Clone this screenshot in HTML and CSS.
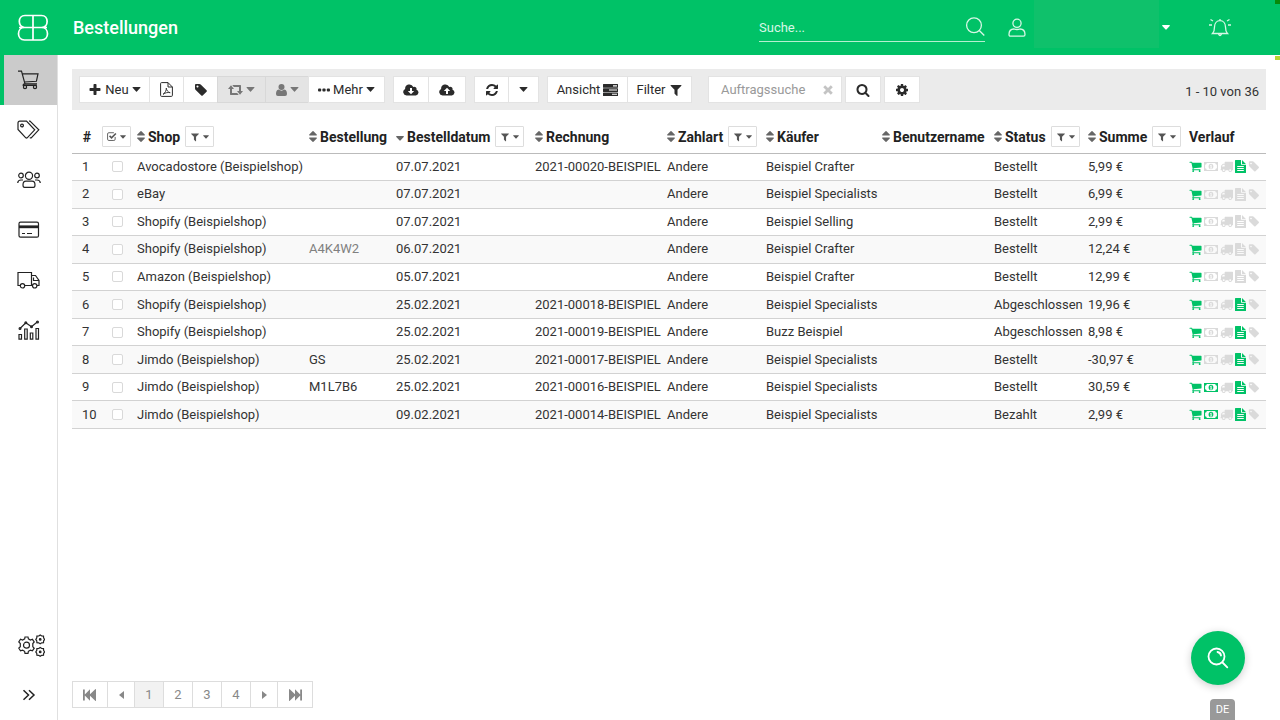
FILE: index.html
```html
<!DOCTYPE html>
<html lang="de">
<head>
<meta charset="utf-8">
<title>Bestellungen</title>
<link rel="stylesheet" href="styles.css">
</head>
<body>
<svg class="sprite" aria-hidden="true">
  <symbol id="plus" viewBox="0 0 1792 1792"><path d="M1600 736v192q0 40-28 68t-68 28h-416v416q0 40-28 68t-68 28h-192q-40 0-68-28t-28-68v-416h-416q-40 0-68-28t-28-68v-192q0-40 28-68t68-28h416v-416q0-40 28-68t68-28h192q40 0 68 28t28 68v416h416q40 0 68 28t28 68z"/></symbol>
  <symbol id="caret" viewBox="0 0 10 6"><path d="M.8 0h8.400q1 .2.4 1L5.500 5.500q-.5.4-1 0L.4 1Q-.2.200.8 0z"/></symbol>
  <symbol id="tag" viewBox="0 0 1792 1792"><path d="M576 448q0-53-37.500-90.500t-90.500-37.500-90.500 37.500-37.500 90.500 37.500 90.500 90.500 37.500 90.500-37.500 37.500-90.500zm1067 576q0 53-37 90l-491 492q-39 37-91 37-53 0-90-37l-715-716q-38-37-64.500-101t-26.500-117v-416q0-52 38-90t90-38h416q53 0 117 26.500t102 64.500l715 714q37 39 37 91z"/></symbol>
  <symbol id="cart" viewBox="0 0 1792 1792"><path d="M704 1536q0 52-38 90t-90 38-90-38-38-90 38-90 90-38 90 38 38 90zm896 0q0 52-38 90t-90 38-90-38-38-90 38-90 90-38 90 38 38 90zm128-1088v512q0 24-16.500 42.500t-40.500 21.500l-1044 122q13 60 13 70 0 16-24 64h920q26 0 45 19t19 45-19 45-45 19h-1024q-26 0-45-19t-19-45q0-11 8-31.500t16-36 21.500-40 15.500-29.500l-177-823h-204q-26 0-45-19t-19-45 19-45 45-19h256q16 0 28.500 6.500t19.500 15.500 13 24.500 8 26 5.500 29.500 4.500 26h1201q26 0 45 19t19 45z"/></symbol>
  <symbol id="truck" viewBox="0 0 1792 1792"><path d="M640 1408q0-52-38-90t-90-38-90 38-38 90 38 90 90 38 90-38 38-90zm-384-512h384v-256h-158q-13 0-22 9l-195 195q-9 9-9 22v30zm1280 512q0-52-38-90t-90-38-90 38-38 90 38 90 90 38 90-38 38-90zm256-1088v1024q0 15-4 26.500t-13.500 18.500-16.500 11.500-23.500 6-22.500 2-25.500 0-22.500-.5q0 106-75 181t-181 75-181-75-75-181h-384q0 106-75 181t-181 75-181-75-75-181h-64q-3 0-22.500.5t-25.500 0-22.500-2-23.500-6-16.500-11.500-13.500-18.500-4-26.500q0-26 19-45t45-19v-320q0-8-.5-35t0-38 2.500-34.500 6.500-37 14-30.500 22.500-30l198-198q19-19 50.500-32t58.500-13h160v-192q0-26 19-45t45-19h1024q26 0 45 19t19 45z"/></symbol>
  <symbol id="search" viewBox="0 0 1792 1792"><path d="M1216 832q0-185-131.500-316.500t-316.500-131.500-316.500 131.500-131.500 316.500 131.500 316.500 316.500 131.500 316.500-131.500 131.500-316.500zm512 832q0 52-38 90t-90 38q-54 0-90-38l-343-342q-179 124-399 124-143 0-273.500-55.500t-225-150-150-225-55.500-273.500 55.500-273.500 150-225 225-150 273.500-55.500 273.500 55.500 225 150 150 225 55.500 273.500q0 220-124 399l343 343q37 37 37 90z"/></symbol>
  <symbol id="cog" viewBox="0 0 1792 1792"><path d="M1152 896q0-106-75-181t-181-75-181 75-75 181 75 181 181 75 181-75 75-181zm512-109v222q0 12-8 23t-20 13l-185 28q-19 54-39 91 35 50 107 138 10 12 10 25t-9 23q-27 37-99 108t-94 71q-12 0-26-9l-138-108q-44 23-91 38-16 136-29 186-7 28-36 28h-222q-14 0-24.500-8.500t-11.500-21.500l-28-184q-49-16-90-37l-141 107q-10 9-25 9-14 0-25-11-126-114-165-168-7-10-7-23 0-12 8-23 15-21 51-66.500t54-70.500q-27-50-41-99l-183-27q-13-2-21-12.500t-8-23.500v-222q0-12 8-23t19-13l186-28q14-46 39-92-40-57-107-138-10-12-10-24 0-10 9-23 26-36 98.500-107.500t94.500-71.500q13 0 26 10l138 107q44-23 91-38 16-136 29-186 7-28 36-28h222q14 0 24.500 8.500t11.500 21.500l28 184q49 16 90 37l142-107q9-9 24-9 13 0 25 10 129 119 165 170 7 8 7 22 0 12-8 23-15 21-51 66.500t-54 70.500q26 50 41 98l183 28q13 2 21 12.500t8 23.500z"/></symbol>
  <symbol id="filter" viewBox="0 0 1792 1792"><path d="M1595 295q17 41-14 70l-493 493v742q0 42-39 59-13 5-25 5-27 0-45-19l-256-256q-19-19-19-45v-486l-493-493q-31-29-14-70 17-39 59-39h1280q42 0 59 39z"/></symbol>
  <symbol id="refresh" viewBox="0 0 1792 1792"><path d="M1639 1056q0 5-1 7-64 268-268 434.500t-478 166.500q-146 0-282.500-55t-243.500-157l-129 129q-19 19-45 19t-45-19-19-45v-448q0-26 19-45t45-19h448q26 0 45 19t19 45-19 45l-137 137q71 66 161 102t187 36q134 0 250-65t186-179q11-17 53-117 8-23 30-23h192q13 0 22.500 9.500t9.500 22.500zm25-800v448q0 26-19 45t-45 19h-448q-26 0-45-19t-19-45 19-45l138-138q-148-137-349-137-134 0-250 65t-186 179q-11 17-53 117-8 23-30 23h-199q-13 0-22.500-9.500t-9.500-22.500v-7q65-268 270-434.500t480-166.500q146 0 284 55.500t245 156.500l130-129q19-19 45-19t45 19 19 45z"/></symbol>
  <symbol id="money" viewBox="0 0 14 10"><path fill-rule="evenodd" d="M0 .5h14v9H0zM2.800 1.600q-.2 1.500-1.700 1.700v3.400q1.500.2 1.700 1.700h8.400q.2-1.500 1.700-1.700V3.300q-1.500-.2-1.700-1.700zM7 2.200c3.200 0 3.200 5.600 0 5.600s-3.200-5.600 0-5.600zm-1 1.900.5.6.1-.1v1.700H6V7h2.200v-.7h-.6V3.200H7z"/></symbol>
  <symbol id="file" viewBox="0 0 11 13"><path fill-rule="evenodd" d="M.6 0H6v4.200q0 .6.600.6H11v7.600q0 .6-.6.600H.6q-.6 0-.6-.6V.6Q0 0 .6 0zM7 .1 10.900 4H7zM2.200 6v.9h6.600V6zm0 2v.9h6.600V8zm0 2v.9h6.600V10z"/></symbol>
  <symbol id="sort" viewBox="0 0 8 11"><path d="M.6 4.500h6.800q.9-.3.3-1L4.500.2Q4 0 3.500.2L.3 3.500q-.6.700.3 1zM.6 6.500h6.800q.9.300.3 1L4.500 10.800q-.5.200-1 0L.3 7.500q-.6-.7.300-1z"/></symbol>
  <symbol id="cloud-down" viewBox="0 0 16 12"><path fill-rule="evenodd" d="M3.600 11.500a3.500 3.500 0 0 1-1.500-6.600A4.300 4.300 0 0 1 10.300 3a2.300 2.300 0 0 1 3.200 2.700 3 3 0 0 1-.6 5.800zM7 4v3H4.800L8 10.200 11.200 7H9V4z"/></symbol>
  <symbol id="cloud-up" viewBox="0 0 16 12"><path fill-rule="evenodd" d="M3.600 11.500a3.500 3.500 0 0 1-1.500-6.600A4.300 4.300 0 0 1 10.300 3a2.300 2.300 0 0 1 3.200 2.700 3 3 0 0 1-.6 5.800zM7 10V7H4.800L8 3.800 11.200 7H9v3z"/></symbol>
  <symbol id="pdf" viewBox="0 0 13 15"><g fill="none" stroke="currentColor"><path d="M1.500.6H8L12.400 5v8.400q0 1-1 1H1.600q-1 0-1-1V1.600q0-1 .9-1zM8 .6V5h4.400"/><path d="M3 12.300c2-1.200 3.500-4 3.300-6.200.2 2.200 1.700 4.200 3.900 4.600-2.300-.5-4.500-.2-7.200 1.600z" stroke-width=".9"/></g></symbol>
  <symbol id="retweet" viewBox="0 0 15 10"><path d="M3 .2 6 4H4v4h5.200L10.700 10H2.600q-.6 0-.6-.7V4H0zM12 9.800 9 6h2V2H5.800L4.300 0h8.100q.6 0 .6.700V6h2z"/></symbol>
  <symbol id="user" viewBox="0 0 11 12"><circle cx="5.500" cy="3" r="3"/><path d="M2.700 5.500c1.800 1.500 3.800 1.500 5.600 0C10.400 5.800 11 8 11 10q0 2-1.900 2H1.900Q0 12 0 10c0-2 .6-4.200 2.700-4.500z"/></symbol>
  <symbol id="dots" viewBox="0 0 12 4"><rect x="0" y=".5" width="3.200" height="3" rx="1"/><rect x="4.400" y=".5" width="3.200" height="3" rx="1"/><rect x="8.800" y=".5" width="3.200" height="3" rx="1"/></symbol>
  <symbol id="server" viewBox="0 0 15 12"><path fill-rule="evenodd" d="M.5 0h14q.5 0 .5.500v2.700q0 .5-.5.500H.5q-.5 0-.5-.5V.5Q0 0 .5 0zM10 1.300v1.100h4V1.300zM.5 4.200h14q.5 0 .5.500v2.700q0 .5-.5.500H.5q-.5 0-.5-.5V4.700q0-.5.500-.5zM6 5.500v1.100h8V5.500zM.5 8.400h14q.5 0 .5.500v2.600q0 .5-.5.500H.5q-.5 0-.5-.5V8.900q0-.5.500-.5zM9 9.700v1.100h5V9.700z"/></symbol>
  <symbol id="cross" viewBox="0 0 10 10"><path d="M2.200 2.200l5.600 5.600M7.800 2.200 2.200 7.800" stroke="currentColor" stroke-width="2.800" stroke-linecap="square"/></symbol>
  <symbol id="check" viewBox="0 0 11 10"><path d="M9 5.500V8q0 1.400-1.400 1.400H2Q.6 9.400.6 8V2.200Q.6.800 2 .8h5.600" fill="none" stroke="currentColor"/><path d="M2.800 4.300 5 6.500 9.800 1.700" fill="none" stroke="currentColor" stroke-width="1.800"/></symbol>
  <symbol id="first" viewBox="0 0 14 12"><path d="M0 .5h1.800v5L7 .3v5L12.500 0Q13 0 13 .5v11q0 .5-.5.500L7 6.700v5L1.800 6.500v5H0z"/></symbol>
</svg>

<header class="topbar">
  <a class="logo" href="#" aria-label="Startseite">
    <svg class="line" width="32" height="28" viewBox="0 0 32 28" stroke-width="1.700"><path d="M16 1.500V26M2 13.500h28M8 1.500h16.500c7.500 0 7.500 12 0 12 8 0 8 12.500 0 12.500h-17c-8 0-8-12.500 0-12.500-7-.5-7-12 .5-12z"/></svg>
  </a>
  <h1 class="title">Bestellungen</h1>
  <form class="global-search">
    <input type="text" placeholder="Suche..." aria-label="Suche">
    <button type="button" aria-label="Suchen"><svg class="line" width="20" height="20" viewBox="0 0 20 20" stroke-width="1.300"><circle cx="9" cy="8.200" r="7.400"/><path d="m14.300 13.500 5 5"/></svg></button>
  </form>
  <button class="account" type="button" aria-label="Konto">
    <svg class="line" width="18" height="20" viewBox="0 0 18 20" stroke-width="1.300"><circle cx="9" cy="5.300" r="4.100"/><path d="M2.500 18.200Q1 18.200 1 16.500q0-5.500 5-5.500 3 1 6 0 5 0 5 5.500 0 1.700-1.500 1.700z"/></svg>
    <span class="account-name"></span>
    <svg class="account-caret" width="8" height="5"><use href="#caret"/></svg>
  </button>
  <button class="bell" type="button" aria-label="Benachrichtigungen">
    <svg class="line" width="24" height="20" viewBox="0 0 24 20" stroke-width="1.300"><path d="M4.500 15.500q2-2 2-6.500c0-4 2.500-6.300 5.500-6.300s5.500 2.300 5.500 6.300q0 4.500 2 6.500zM10.500 16q1.500 3 3 0M12 1v1.700M1 7h3M20 7h3M2.500 1.500 5 3M21.500 1.500 19 3"/></svg>
  </button>
  <span class="mark mark-dark"></span><span class="mark mark-lime"></span>
</header>

<div class="layout">
  <nav class="sidebar" aria-label="Hauptmenü">
    <a class="active" href="#" aria-label="Bestellungen"><svg class="line" width="22" height="20" viewBox="0 0 22 20"><path d="M0 1.200h3.500L7 13.800h12M4.200 3.800H20l-1.600 7.500L6.300 12M7 13.800q-2 0-1.800 1.500h13.500"/><circle cx="7" cy="17" r="1.600"/><circle cx="17" cy="17" r="1.600"/></svg></a>
    <a href="#" aria-label="Artikel"><svg class="line" width="23" height="20" viewBox="0 0 23 20"><path d="M1 3q0-1.800 1.800-1.800h6.700l8.200 8.600-7.500 8q-.7.600-1.400 0L1 9.500zM12 1.200l1-.1 8.800 8.700-7.600 8h-1.400"/><circle cx="5" cy="5.500" r="1.400"/></svg></a>
    <a href="#" aria-label="Kunden"><svg class="line" width="24" height="18" viewBox="0 0 24 18"><circle cx="12" cy="4.800" r="3.600"/><circle cx="4" cy="4.500" r="2.300"/><circle cx="20" cy="4.500" r="2.300"/><path d="M6 14q0-3.800 3-3.800h6q3 0 3 3.800 0 2.300-1.500 2.300h-9Q6 16.300 6 14zM.7 12q.2-3 3.300-3h2M23.300 12q-.2-3-3.300-3h-2"/></svg></a>
    <a href="#" aria-label="Zahlungen"><svg class="line" width="22" height="18" viewBox="0 0 22 18"><rect x="1" y="1.200" width="19.500" height="15" rx="1.500"/><path d="M1 5.800h19.500" stroke-width="2.800"/><path d="M4 12.500h3m2 0h5"/></svg></a>
    <a href="#" aria-label="Versand"><svg class="line" width="23" height="18" viewBox="0 0 23 18"><path d="M3.500 14.500H1v-13h13.500v13H7.500M14.500 4.500h4l3.500 5v5h-2M14.500 14.500h1.200M16.500 6.500v3H22"/><circle cx="5.500" cy="14.800" r="2.200"/><circle cx="17.700" cy="14.800" r="2.200"/></svg></a>
    <a href="#" aria-label="Statistik"><svg class="line" width="22" height="20" viewBox="0 0 22 20"><path d="M1 14.500h2.500v4.700H1zM6.700 9h2.500v10.200H6.700zM12.300 13h2.500v6.200h-2.500zM18 8.500h2.500v10.700H18zM2 8.500l5.800-5.700 5.700 4 6-5"/><circle cx="2" cy="8.500" r=".9"/><circle cx="7.800" cy="2.800" r=".9"/><circle cx="13.500" cy="6.800" r=".9"/><circle cx="19.500" cy="2" r=".9"/></svg></a>
    <a class="settings" href="#" aria-label="Einstellungen"><svg class="line" width="28" height="24" viewBox="0 0 28 24"><path d="M7.700 4.900 8 3h3l.4 1.900 2 1.100 2-.7 1.800 2.700-1.400 1.500v3.200l1.400 1.500-1.800 2.700-2-.7-2 1.100L11 19.300H8l-.4-2-2-1.100-2.100.7L1.800 14.200l1.500-1.500V9.500L1.800 8l1.700-2.700 2.100.7z"/><circle cx="9.500" cy="11.200" r="3"/><path d="m21.700 2 1.500-1 1.500 1 1.800.1.100 1.800 1 1.500-1 1.500-.1 1.800-1.800.1-1.500 1-1.500-1-1.800-.1-.1-1.800-1-1.500 1-1.500.1-1.800zM21.700 14.500l1.500-1 1.500 1 1.800.1.100 1.800 1 1.500-1 1.500-.1 1.800-1.800.1-1.500 1-1.500-1-1.800-.1-.1-1.800-1-1.500 1-1.500.1-1.800z"/><circle cx="23.200" cy="5.400" r=".8"/><circle cx="23.200" cy="17.900" r=".8"/></svg></a>
    <a class="expand" href="#" aria-label="Menü ausklappen"><svg class="line" width="14" height="12" viewBox="0 0 14 12"><path d="m1.500 1.200 5 4.800-5 4.800M7 1.200 12 6l-5 4.800" stroke-width="1.500"/></svg></a>
  </nav>

  <main class="content">
    <div class="toolbar">
      <div class="group">
        <button class="w-neu" type="button"><svg width="14" height="14"><use href="#plus"/></svg>Neu<svg width="9" height="5"><use href="#caret"/></svg></button>
        <button class="w-icon" type="button" aria-label="PDF"><svg width="13" height="15"><use href="#pdf"/></svg></button>
        <button class="w-icon" type="button" aria-label="Etikett"><svg width="14" height="14"><use href="#tag"/></svg></button>
        <button class="w-drop" type="button" disabled aria-label="Status ändern"><svg width="15" height="10"><use href="#retweet"/></svg><svg width="9" height="5"><use href="#caret"/></svg></button>
        <button class="w-user" type="button" disabled aria-label="Käufer"><svg width="11" height="12"><use href="#user"/></svg><svg width="9" height="5"><use href="#caret"/></svg></button>
        <button class="w-mehr" type="button"><svg width="12" height="4"><use href="#dots"/></svg>Mehr<svg width="9" height="5"><use href="#caret"/></svg></button>
      </div>
      <div class="group">
        <button class="w-cloud" type="button" aria-label="Herunterladen"><svg width="16" height="12"><use href="#cloud-down"/></svg></button>
        <button class="w-cloud" type="button" aria-label="Hochladen"><svg width="16" height="12"><use href="#cloud-up"/></svg></button>
      </div>
      <div class="group">
        <button class="w-icon" type="button" aria-label="Aktualisieren"><svg width="14" height="14"><use href="#refresh"/></svg></button>
        <button class="w-small" type="button" aria-label="Optionen"><svg width="9" height="5"><use href="#caret"/></svg></button>
      </div>
      <div class="group">
        <button class="w-view" type="button">Ansicht<svg width="15" height="12"><use href="#server"/></svg></button>
        <button class="w-filter" type="button">Filter<svg width="14" height="14"><use href="#filter"/></svg></button>
      </div>
      <div class="order-search">
        <label class="field"><input type="text" placeholder="Auftragssuche" aria-label="Auftragssuche"><svg width="10" height="10"><use href="#cross"/></svg></label>
        <button class="w-cloud" type="button" aria-label="Auftrag suchen"><svg width="14" height="14"><use href="#search"/></svg></button>
        <button class="w-cloud" type="button" aria-label="Einstellungen"><svg width="14" height="14"><use href="#cog"/></svg></button>
      </div>
      <span class="count">1 - 10 von 36</span>
    </div>

    <table class="orders">
      <colgroup><col class="c-num"><col class="c-check"><col><col class="c-order"><col class="c-date"><col class="c-invoice"><col class="c-pay"><col class="c-buyer"><col class="c-user"><col class="c-status"><col class="c-sum"><col class="c-flow"></colgroup>
      <thead>
        <tr>
          <th class="num">#</th>
          <th><button class="mini" type="button" aria-label="Auswahl"><svg width="10" height="9"><use href="#check"/></svg><svg width="6" height="4"><use href="#caret"/></svg></button></th>
          <th><div class="head"><svg width="8" height="11"><use href="#sort"/></svg>Shop<button class="mini" type="button" aria-label="Shop filtern"><svg width="10" height="10"><use href="#filter"/></svg><svg width="6" height="4"><use href="#caret"/></svg></button></div></th>
          <th><div class="head"><svg width="8" height="11"><use href="#sort"/></svg>Bestellung</div></th>
          <th><div class="head"><svg class="desc" width="8" height="5"><use href="#caret"/></svg>Bestelldatum<button class="mini" type="button" aria-label="Bestelldatum filtern"><svg width="10" height="10"><use href="#filter"/></svg><svg width="6" height="4"><use href="#caret"/></svg></button></div></th>
          <th><div class="head"><svg width="8" height="11"><use href="#sort"/></svg>Rechnung</div></th>
          <th><div class="head"><svg width="8" height="11"><use href="#sort"/></svg>Zahlart<button class="mini" type="button" aria-label="Zahlart filtern"><svg width="10" height="10"><use href="#filter"/></svg><svg width="6" height="4"><use href="#caret"/></svg></button></div></th>
          <th><div class="head"><svg width="8" height="11"><use href="#sort"/></svg>Käufer</div></th>
          <th><div class="head"><svg width="8" height="11"><use href="#sort"/></svg>Benutzername</div></th>
          <th><div class="head"><svg width="8" height="11"><use href="#sort"/></svg>Status<button class="mini" type="button" aria-label="Status filtern"><svg width="10" height="10"><use href="#filter"/></svg><svg width="6" height="4"><use href="#caret"/></svg></button></div></th>
          <th><div class="head"><svg width="8" height="11"><use href="#sort"/></svg>Summe<button class="mini" type="button" aria-label="Summe filtern"><svg width="10" height="10"><use href="#filter"/></svg><svg width="6" height="4"><use href="#caret"/></svg></button></div></th>
          <th>Verlauf</th>
        </tr>
      </thead>
      <tbody>
        <tr><td class="num">1</td><td class="pick"><input type="checkbox" aria-label="Zeile 1"></td><td>Avocadostore (Beispielshop)</td><td></td><td>07.07.2021</td><td>2021-00020-BEISPIEL</td><td>Andere</td><td>Beispiel Crafter</td><td></td><td>Bestellt</td><td>5,99 €</td><td><div class="flow"><svg class="on"><use href="#cart"/></svg><svg><use href="#money"/></svg><svg><use href="#truck"/></svg><svg class="on"><use href="#file"/></svg><svg><use href="#tag"/></svg></div></td></tr>
        <tr><td class="num">2</td><td class="pick"><input type="checkbox" aria-label="Zeile 2"></td><td>eBay</td><td></td><td>07.07.2021</td><td></td><td>Andere</td><td>Beispiel Specialists</td><td></td><td>Bestellt</td><td>6,99 €</td><td><div class="flow"><svg class="on"><use href="#cart"/></svg><svg><use href="#money"/></svg><svg><use href="#truck"/></svg><svg><use href="#file"/></svg><svg><use href="#tag"/></svg></div></td></tr>
        <tr><td class="num">3</td><td class="pick"><input type="checkbox" aria-label="Zeile 3"></td><td>Shopify (Beispielshop)</td><td></td><td>07.07.2021</td><td></td><td>Andere</td><td>Beispiel Selling</td><td></td><td>Bestellt</td><td>2,99 €</td><td><div class="flow"><svg class="on"><use href="#cart"/></svg><svg><use href="#money"/></svg><svg><use href="#truck"/></svg><svg><use href="#file"/></svg><svg><use href="#tag"/></svg></div></td></tr>
        <tr><td class="num">4</td><td class="pick"><input type="checkbox" aria-label="Zeile 4"></td><td>Shopify (Beispielshop)</td><td class="muted">A4K4W2</td><td>06.07.2021</td><td></td><td>Andere</td><td>Beispiel Crafter</td><td></td><td>Bestellt</td><td>12,24 €</td><td><div class="flow"><svg class="on"><use href="#cart"/></svg><svg><use href="#money"/></svg><svg><use href="#truck"/></svg><svg><use href="#file"/></svg><svg><use href="#tag"/></svg></div></td></tr>
        <tr><td class="num">5</td><td class="pick"><input type="checkbox" aria-label="Zeile 5"></td><td>Amazon (Beispielshop)</td><td></td><td>05.07.2021</td><td></td><td>Andere</td><td>Beispiel Crafter</td><td></td><td>Bestellt</td><td>12,99 €</td><td><div class="flow"><svg class="on"><use href="#cart"/></svg><svg><use href="#money"/></svg><svg><use href="#truck"/></svg><svg><use href="#file"/></svg><svg><use href="#tag"/></svg></div></td></tr>
        <tr><td class="num">6</td><td class="pick"><input type="checkbox" aria-label="Zeile 6"></td><td>Shopify (Beispielshop)</td><td></td><td>25.02.2021</td><td>2021-00018-BEISPIEL</td><td>Andere</td><td>Beispiel Specialists</td><td></td><td>Abgeschlossen</td><td>19,96 €</td><td><div class="flow"><svg class="on"><use href="#cart"/></svg><svg><use href="#money"/></svg><svg><use href="#truck"/></svg><svg class="on"><use href="#file"/></svg><svg><use href="#tag"/></svg></div></td></tr>
        <tr><td class="num">7</td><td class="pick"><input type="checkbox" aria-label="Zeile 7"></td><td>Shopify (Beispielshop)</td><td></td><td>25.02.2021</td><td>2021-00019-BEISPIEL</td><td>Andere</td><td>Buzz Beispiel</td><td></td><td>Abgeschlossen</td><td>8,98 €</td><td><div class="flow"><svg class="on"><use href="#cart"/></svg><svg><use href="#money"/></svg><svg><use href="#truck"/></svg><svg class="on"><use href="#file"/></svg><svg><use href="#tag"/></svg></div></td></tr>
        <tr><td class="num">8</td><td class="pick"><input type="checkbox" aria-label="Zeile 8"></td><td>Jimdo (Beispielshop)</td><td>GS</td><td>25.02.2021</td><td>2021-00017-BEISPIEL</td><td>Andere</td><td>Beispiel Specialists</td><td></td><td>Bestellt</td><td>-30,97 €</td><td><div class="flow"><svg class="on"><use href="#cart"/></svg><svg><use href="#money"/></svg><svg><use href="#truck"/></svg><svg class="on"><use href="#file"/></svg><svg><use href="#tag"/></svg></div></td></tr>
        <tr><td class="num">9</td><td class="pick"><input type="checkbox" aria-label="Zeile 9"></td><td>Jimdo (Beispielshop)</td><td>M1L7B6</td><td>25.02.2021</td><td>2021-00016-BEISPIEL</td><td>Andere</td><td>Beispiel Specialists</td><td></td><td>Bestellt</td><td>30,59 €</td><td><div class="flow"><svg class="on"><use href="#cart"/></svg><svg class="on"><use href="#money"/></svg><svg><use href="#truck"/></svg><svg class="on"><use href="#file"/></svg><svg><use href="#tag"/></svg></div></td></tr>
        <tr><td class="num">10</td><td class="pick"><input type="checkbox" aria-label="Zeile 10"></td><td>Jimdo (Beispielshop)</td><td></td><td>09.02.2021</td><td>2021-00014-BEISPIEL</td><td>Andere</td><td>Beispiel Specialists</td><td></td><td>Bezahlt</td><td>2,99 €</td><td><div class="flow"><svg class="on"><use href="#cart"/></svg><svg class="on"><use href="#money"/></svg><svg><use href="#truck"/></svg><svg class="on"><use href="#file"/></svg><svg><use href="#tag"/></svg></div></td></tr>
      </tbody>
    </table>

    <div class="pager">
      <button class="edge" type="button" aria-label="Erste Seite"><svg width="14" height="12"><use href="#first"/></svg></button>
      <button class="step" type="button" aria-label="Zurück"><svg width="5" height="8" viewBox="0 0 5 8"><path d="M5 0v8L0 4z"/></svg></button>
      <button class="current" type="button">1</button>
      <button type="button">2</button>
      <button type="button">3</button>
      <button type="button">4</button>
      <button class="step" type="button" aria-label="Weiter"><svg width="5" height="8" viewBox="0 0 5 8"><path d="M0 0v8l5-4z"/></svg></button>
      <button class="edge" type="button" aria-label="Letzte Seite"><svg class="flip" width="14" height="12"><use href="#first"/></svg></button>
    </div>
  </main>
</div>

<button class="fab" type="button" aria-label="Hilfe suchen"><svg class="line" width="22" height="22" viewBox="0 0 22 22" stroke-width="1.800" stroke-linecap="round"><circle cx="9.500" cy="9.500" r="8"/><path d="m15.500 15.500 4.800 4.800M10.500 5q3 .5 3.500 3.500"/></svg></button>
<button class="lang" type="button">DE</button>
</body>
</html>
```
FILE: styles.css
```css
* { box-sizing: border-box; }

body {
  margin: 0;
  min-height: 100vh;
  display: flex;
  flex-direction: column;
  background: #fff;
  color: #333;
  font: 13px/18px Roboto, "Liberation Sans", sans-serif;
}

button, input { font: inherit; color: inherit; }
button { padding: 0; border: 0; background: none; }
svg { fill: currentColor; flex: none; }
svg.line { fill: none; stroke: currentColor; }
.sprite { position: absolute; width: 0; height: 0; }

/* Top bar */
.topbar {
  position: relative;
  display: flex;
  align-items: center;
  height: 55px;
  padding: 0 48px 0 17px;
  background: #00c267;
  color: #d8f7e6;
}
.logo { display: flex; width: 56px; color: #fff; }
.title { margin: 0; color: #fff; font-size: 18px; line-height: 24px; font-weight: 500; }
.global-search {
  display: flex;
  align-items: center;
  width: 226px;
  height: 28px;
  margin-left: auto;
  border-bottom: 1px solid #b5efd0;
}
.global-search input {
  flex: 1;
  min-width: 0;
  padding: 2px 0 0;
  border: 0;
  background: none;
}
.global-search input::placeholder { color: #d8f7e6; opacity: 1; }
.global-search button { display: flex; }
.account { display: flex; align-items: center; align-self: stretch; margin-left: 23px; }
.account-name { align-self: flex-start; width: 125px; height: 48px; margin: 0 3px 0 8px; background: #0fc16b; }
.account-caret { color: #fff; }
.bell { display: flex; margin-left: 38px; }
.mark { position: absolute; right: 0; width: 5px; height: 4px; }
.mark-dark { top: 0; background: #078a0b; }
.mark-lime { top: 56px; background: #b5d433; }

/* Sidebar */
.layout { flex: 1; display: flex; }
.sidebar {
  display: flex;
  flex-direction: column;
  width: 58px;
  border-right: 1px solid #e0e0e0;
}
.sidebar a {
  display: flex;
  align-items: center;
  justify-content: center;
  height: 50px;
  color: #222;
}
.sidebar svg { stroke-width: 1.2; }
.sidebar .active { border-left: 4px solid #00c267; padding-right: 4px; background: #cbcbcb; }
.sidebar .settings { margin-top: auto; padding: 2px 0 0 5px; }

/* Content */
.content {
  flex: 1;
  min-width: 0;
  display: flex;
  flex-direction: column;
  padding: 14px 14px 12px;
}
.toolbar {
  display: flex;
  align-items: center;
  gap: 8px;
  height: 41px;
  padding: 0 7px;
  background: #ebebeb;
}
.group { display: flex; }
.toolbar button {
  display: flex;
  align-items: center;
  justify-content: center;
  gap: 3px;
  height: 27px;
  border: 1px solid #e3e3e3;
  background: #fff;
  color: #2b2b2b;
}
.group button + button { margin-left: -1px; }
.toolbar button:disabled { background: #e4e4e4; border-color: #d8d8d8; color: #777; }
.toolbar .w-neu { width: 71px; }
.toolbar .w-icon { width: 35px; }
.toolbar .w-drop { width: 49px; }
.toolbar .w-user { width: 44px; }
.toolbar .w-mehr { width: 77px; }
.toolbar .w-cloud { width: 36px; }
.group .w-cloud + .w-cloud { width: 38px; }
.toolbar .w-small { width: 31px; }
.toolbar .w-view { width: 81px; }
.toolbar .w-filter { width: 65px; }
.order-search { display: flex; gap: 3px; margin-left: 8px; }
.field {
  display: flex;
  align-items: center;
  width: 134px;
  height: 27px;
  padding: 0 8px 0 12px;
  border: 1px solid #e3e3e3;
  background: #fff;
  color: #c4c4c4;
}
.field input { flex: 1; min-width: 0; padding: 0; border: 0; background: none; color: #333; }
.field input::placeholder { color: #999; opacity: 1; }
.count { margin: 5px 0 0 auto; }

/* Orders table */
.orders {
  width: 100%;
  height: 308px;
  margin-top: 11px;
  table-layout: fixed;
  border-collapse: collapse;
}
.c-num { width: 30px; }
.c-check { width: 35px; }
.c-order { width: 87px; }
.c-date { width: 139px; }
.c-invoice { width: 132px; }
.c-pay { width: 99px; }
.c-buyer { width: 116px; }
.c-user { width: 112px; }
.c-status { width: 94px; }
.c-sum { width: 101px; }
.c-flow { width: 77px; }
.orders th, .orders td { padding: 0; text-align: left; white-space: nowrap; }
.orders th { height: 32px; color: #222; font-size: 14px; font-weight: 700; }
.orders tr { border-bottom: 1px solid #d2d2d2; }
.orders thead tr { border-color: #bbb; }
.orders tbody tr:nth-child(even) { background: #f9f9f9; }
.orders th.num { text-align: center; }
.orders td.num { padding-left: 10px; }
.orders .muted { color: #808080; }
.head { display: flex; align-items: center; gap: 3px; }
.head > svg { color: #666; }
.head .desc { margin-top: 4px; }
.mini {
  display: inline-flex;
  align-items: center;
  justify-content: center;
  gap: 3px;
  width: 29px;
  height: 21px;
  border: 1px solid #ddd;
  border-radius: 1px;
  background: #fff;
  color: #555;
  vertical-align: middle;
}
.head .mini { margin-left: 2px; }
.pick input {
  appearance: none;
  display: block;
  width: 11px;
  height: 11px;
  margin: 0 0 0 10px;
  border: 1px solid #d9d9d9;
  border-radius: 2px;
  background: #fff;
}
.flow {
  display: grid;
  grid-template-columns: 13px 14px 13px 11px 12px;
  gap: 2px;
  align-items: center;
  color: #dadada;
}
.flow svg { width: 100%; height: 13px; }
.flow .on { color: #00c267; }

/* Pager */
.pager { display: flex; align-self: flex-start; margin-top: auto; color: #888; }
.pager button {
  display: flex;
  align-items: center;
  justify-content: center;
  width: 30px;
  height: 27px;
  border: 1px solid #ddd;
}
.pager button + button { margin-left: -1px; }
.pager .edge { width: 36px; }
.pager .step { width: 28px; }
.pager .current { background: #f2f2f2; }
.flip { transform: scaleX(-1); }

/* Floating controls */
.fab {
  position: fixed;
  right: 35px;
  bottom: 35px;
  display: flex;
  align-items: center;
  justify-content: center;
  width: 54px;
  height: 54px;
  border-radius: 50%;
  background: #00c267;
  color: #fff;
  box-shadow: 0 2px 8px rgba(0, 0, 0, .2);
}
.lang {
  position: fixed;
  right: 45px;
  bottom: 0;
  width: 25px;
  height: 21px;
  border-radius: 4px 4px 0 0;
  background: #999;
  color: #fff;
  font-size: 11px;
}
```
